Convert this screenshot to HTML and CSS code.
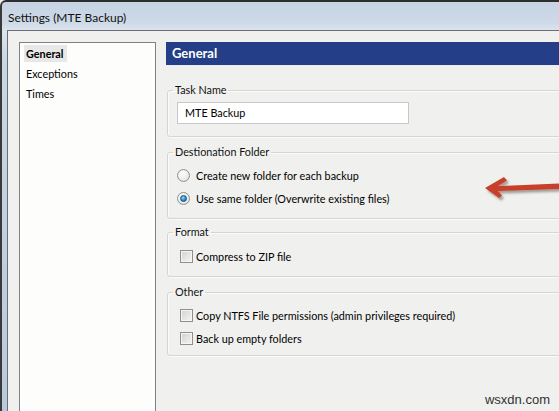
FILE: index.html
```html
<!DOCTYPE html>
<html>
<head>
<meta charset="utf-8">
<link rel="stylesheet" href="styles.css">
</head>
<body>
<div class="window">
  <div class="titlebar"><span class="title">Settings (MTE Backup)</span></div>
  <div class="client">
    <nav class="nav">
      <div class="nav-item active"><span>General</span></div>
      <div class="nav-item"><span>Exceptions</span></div>
      <div class="nav-item"><span>Times</span></div>
    </nav>
    <section class="main">
      <div class="header">General</div>
      <fieldset class="group g-task">
        <legend>Task Name</legend>
        <div class="input">MTE Backup</div>
      </fieldset>
      <fieldset class="group g-dest">
        <legend>Destionation Folder</legend>
        <div class="row"><span class="radio"></span><span class="lbl">Create new folder for each backup</span></div>
        <div class="row"><span class="radio checked"></span><span class="lbl">Use same folder (Overwrite existing files)</span></div>
      </fieldset>
      <fieldset class="group g-format">
        <legend>Format</legend>
        <div class="row"><span class="check"></span><span class="lbl">Compress to ZIP file</span></div>
      </fieldset>
      <fieldset class="group g-other">
        <legend>Other</legend>
        <div class="row"><span class="check"></span><span class="lbl">Copy NTFS File permissions (admin privileges required)</span></div>
        <div class="row"><span class="check"></span><span class="lbl">Back up empty folders</span></div>
      </fieldset>
    </section>
  </div>
  <svg class="arrow" width="559" height="411" viewBox="0 0 559 411">
    <defs>
      <filter id="sh" x="-10%" y="-30%" width="130%" height="180%">
        <feDropShadow dx="2" dy="2.5" stdDeviation="1.2" flood-color="#000" flood-opacity="0.35"/>
      </filter>
    </defs>
    <path d="M485,188 L504,177 L507,180.5 L498,186 L559,183.5 L559,189 L498,191 L502,195.5 L499,198 Z" fill="#c8402c" filter="url(#sh)"/>
  </svg>
  <div class="watermark">wsxdn.com</div>
</div>
</body>
</html>
```
FILE: styles.css
```css
html, body {
  margin: 0;
  width: 559px;
  height: 411px;
  overflow: hidden;
  background: #f0f0ee;
}
body {
  font-family: "Segoe UI", Lato, "Noto Sans", sans-serif;
  font-size: 10.8px;
  color: #000;
}
.window {
  position: relative;
  height: 411px;
  box-sizing: border-box;
  border-top: 2px solid #2e2e2e;
  border-left: 2px solid #3a3a3a;
  border-top-left-radius: 6px;
  background: linear-gradient(to bottom, #c6d3e3 0, #cdd9e7 20px, #dbe4ee 28px, #c9d6e5 60px, #b9c9dc 411px);
  display: flex;
  flex-direction: column;
  overflow: hidden;
}
.titlebar {
  height: 28px;
  flex-shrink: 0;
  display: flex;
  align-items: center;
  padding-left: 6px;
}
.title {
  font-size: 12px;
  color: #111;
  position: relative;
  top: 1px;
}
.client {
  flex: 1;
  margin-left: 5px;
  border-top: 1px solid #6a6d72;
  border-left: 1px solid #6a6d72;
  background: #f0f0ee;
  display: flex;
  padding: 11px 0 0 11px;
}
.nav {
  flex-shrink: 0;
  height: 420px;
  width: 137px;
  box-sizing: border-box;
  background: #fdfdfc;
  border: 1px solid #7e8288;
  padding: 1px 0 0 4px;
}
.nav-item {
  height: 20px;
  line-height: 20px;
}
.nav-item span {
  display: inline-block;
  line-height: 17px;
  padding: 0 1px 0 2px;
}
.nav-item.active span {
  background: #e8e8e8;
  font-weight: bold;
  padding: 0 3px 0 2px;
}
.main {
  width: 420px;
  flex-shrink: 0;
  margin-left: 10px;
}
.header {
  height: 23px;
  line-height: 23px;
  background: #243f87;
  color: #fff;
  font-weight: bold;
  font-size: 13px;
  padding-left: 6px;
  border-bottom: 1px solid #e4f0f6;
}
.group {
  margin: 0 0 0 1px;
  border: 1px solid #d4d6d6;
  border-radius: 3px;
  box-shadow: inset 1px 1px 0 #fbfbfb, 1px 1px 0 #fbfbfb;
  padding: 0 0 0 9px;
  min-width: 0;
}
.group legend {
  line-height: 16px;
  padding: 0 2px;
  margin-left: -4px;
  color: #111;
}
.g-task { margin-top: 16px; padding-bottom: 12px; }
.g-dest { margin-top: 7px; padding-top: 4px; padding-bottom: 8px; }
.g-format { margin-top: 5px; padding-top: 5px; padding-bottom: 8px; }
.g-other { margin-top: 7px; padding-top: 4px; padding-bottom: 5px; }
.input {
  margin-top: 4px;
  width: 223px;
  height: 20px;
  line-height: 20px;
  background: #fff;
  border: 1px solid #c9c9c9;
  padding-left: 7px;
  box-sizing: content-box;
}
.row {
  height: 23px;
  display: flex;
  align-items: center;
}
.radio {
  width: 11px;
  height: 11px;
  border-radius: 50%;
  border: 1px solid #8d9296;
  background: radial-gradient(circle at 40% 35%, #ffffff 0, #f2f2f2 40%, #d6d8da 100%);
  margin-right: 6px;
  position: relative;
  flex-shrink: 0;
}
.radio.checked::after {
  content: "";
  position: absolute;
  left: 2px;
  top: 2px;
  width: 5px;
  height: 5px;
  border-radius: 50%;
  border: 1px solid #1c4f75;
  background: radial-gradient(circle at 40% 35%, #8fe0ff 0, #2c8cc8 55%, #0e4f86 100%);
}
.check {
  width: 11px;
  height: 11px;
  border: 1px solid #8e8f8f;
  background: linear-gradient(135deg, #cfcfcf 0, #e4e4e4 50%, #f4f4f4 100%);
  box-shadow: inset 0 0 0 1px #f6f6f6;
  margin-left: 3px;
  margin-right: 3px;
  flex-shrink: 0;
}
.arrow {
  position: absolute;
  left: -2px;
  top: -2px;
  pointer-events: none;
}
.watermark {
  position: absolute;
  right: 9px;
  bottom: 4px;
  font-family: "Liberation Sans", Arial, sans-serif;
  font-size: 13px;
  color: #333;
}
```
